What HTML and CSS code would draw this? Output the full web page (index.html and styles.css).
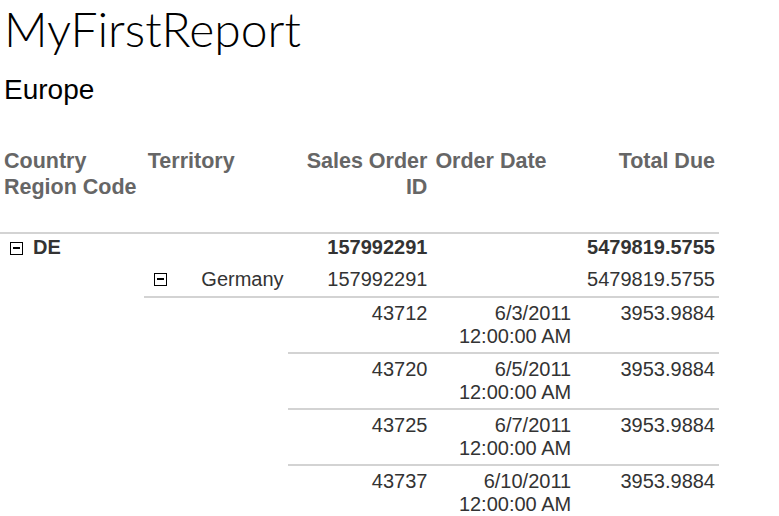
FILE: index.html
```html
<!DOCTYPE html>
<html lang="en">
<head>
    <meta charset="UTF-8">
    <title>MyFirstReport</title>
    <link rel="stylesheet" href="styles.css">
</head>
<body>
    <div class="report">
        <h1 class="title">MyFirstReport</h1>
        <div class="subtitle">Europe</div>

        <table class="grid">
            <colgroup>
                <col><col><col><col><col>
            </colgroup>
            <thead>
                <tr>
                    <th>Country Region Code</th>
                    <th>Territory</th>
                    <th class="num">Sales Order ID</th>
                    <th>Order Date</th>
                    <th class="num">Total Due</th>
                </tr>
            </thead>
            <tbody>
                <!-- country group -->
                <tr class="group-row">
                    <td><span class="toggle"></span><span class="group-name">DE</span></td>
                    <td></td>
                    <td class="num">157992291</td>
                    <td></td>
                    <td class="num">5479819.5755</td>
                </tr>
                <!-- territory group -->
                <tr class="sub-row">
                    <td class="blank"></td>
                    <td class="ruled"><div class="sub-cell"><span class="toggle"></span><span>Germany</span></div></td>
                    <td class="num ruled">157992291</td>
                    <td class="ruled"></td>
                    <td class="num ruled">5479819.5755</td>
                </tr>
                <!-- detail rows -->
                <tr class="detail-row">
                    <td class="blank"></td><td class="blank"></td>
                    <td class="num ruled">43712</td>
                    <td class="num ruled">6/3/2011<br>12:00:00 AM</td>
                    <td class="num ruled">3953.9884</td>
                </tr>
                <tr class="detail-row">
                    <td class="blank"></td><td class="blank"></td>
                    <td class="num ruled">43720</td>
                    <td class="num ruled">6/5/2011<br>12:00:00 AM</td>
                    <td class="num ruled">3953.9884</td>
                </tr>
                <tr class="detail-row">
                    <td class="blank"></td><td class="blank"></td>
                    <td class="num ruled">43725</td>
                    <td class="num ruled">6/7/2011<br>12:00:00 AM</td>
                    <td class="num ruled">3953.9884</td>
                </tr>
                <tr class="detail-row">
                    <td class="blank"></td><td class="blank"></td>
                    <td class="num ruled">43737</td>
                    <td class="num ruled">6/10/2011<br>12:00:00 AM</td>
                    <td class="num ruled">3953.9884</td>
                </tr>
            </tbody>
        </table>
    </div>
</body>
</html>
```

FILE: styles.css
```css
body {
    margin: 0;
    background-color: white;
    font-family: 'Liberation Sans', Arial, sans-serif;
}

.title {
    font-family: 'Segoe UI', Lato, sans-serif;
    font-weight: 300;
    font-size: 48px;
    line-height: 58px;
    margin: 0 0 0 4px;
    color: #000;
}

.subtitle {
    font-size: 28px;
    line-height: 32px;
    margin: 16px 0 0 4px;
    color: #000;
}

.grid {
    width: 719px;
    table-layout: fixed;
    border-collapse: collapse;
    margin-top: 40px;
    color: #333;
    font-size: 20px;
    line-height: 23px;
}

.grid th {
    font-size: 21.5px;
    line-height: 26px;
    font-weight: bold;
    color: #666;
    text-align: left;
    vertical-align: top;
    padding: 2px 4px 32px 4px;
    border-bottom: 2px solid #d3d3d3;
}

.grid td {
    padding: 2px 4px 2px 5px;
    vertical-align: top;
    text-align: left;
}

.grid .num {
    text-align: right;
}

.group-row td {
    font-weight: bold;
    height: 28px;
}

.sub-row td {
    height: 26px;
}

.detail-row td {
    padding-top: 4px;
    padding-bottom: 4px;
}

.grid td.ruled {
    border-bottom: 2px solid #d3d3d3;
}

.sub-cell {
    display: flex;
    justify-content: space-between;
    align-items: center;
}

.toggle {
    display: inline-block;
    position: relative;
    width: 11px;
    height: 11px;
    border: 1px solid #000;
    margin-left: 5px;
    vertical-align: -1px;
}

.toggle::after {
    content: '';
    position: absolute;
    left: 2px;
    top: 4px;
    width: 7px;
    height: 2px;
    background-color: #000;
}

.group-name {
    margin-left: 10px;
}
```
